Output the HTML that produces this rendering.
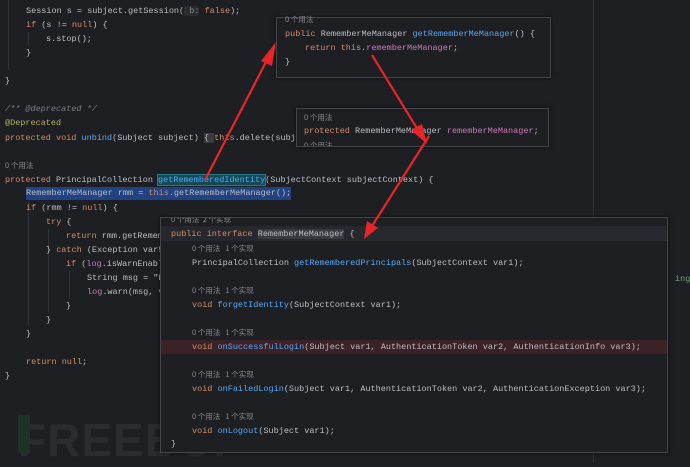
<!DOCTYPE html>
<html><head><meta charset="utf-8"><style>
body{margin:0;width:690px;height:463px;background:#1e1f22;overflow:hidden;position:relative;font-family:"Liberation Mono","Noto Sans CJK SC",monospace;font-size:8.5px;color:#bcbec4}
.l{position:absolute;height:14px;line-height:14px;white-space:pre}
.k{color:#cf8e6d}.m{color:#56a8f5}.f{color:#c77dbb}.c{color:#7a7e85;font-style:italic}.a{color:#b3ae60}.h{color:#868a91;font-family:"Noto Sans CJK SC","Liberation Sans",sans-serif;font-size:7.5px}
.s{color:#6aab73}
.pop{position:absolute;background:#1e1f22;border:1px solid #44464c;box-shadow:0 0 4px rgba(0,0,0,.6)}
.g{position:absolute;width:1px;background:#313338}
</style></head><body>
<div class="g" style="left:593px;top:0;height:463px"></div>
<div class="g" style="left:8px;top:0;height:70px"></div>
<div class="g" style="left:28px;top:32px;height:14px"></div>
<div class="g" style="left:28px;top:201px;height:125px"></div>
<div class="g" style="left:48px;top:229px;height:83px"></div>
<div class="g" style="left:69px;top:271px;height:28px"></div>

<div class="l" style="left:26px;top:4px">Session s = subject.getSession(<span style="background:#2b2d30;color:#868a91;border-radius:2px"> b:</span> <span class="k">false</span>);</div>
<div class="l" style="left:26px;top:18px"><span class="k">if</span> (s != <span class="k">null</span>) {</div>
<div class="l" style="left:46px;top:32px">s.stop();</div>
<div class="l" style="left:26px;top:46px">}</div>
<div class="l" style="left:5px;top:74px">}</div>
<div class="l c" style="left:5px;top:102px">/** @deprecated */</div>
<div class="l a" style="left:5px;top:116px">@Deprecated</div>
<div class="l" style="left:5px;top:131px"><span class="k">protected void </span><span class="m">unbind</span>(Subject subject) <span style="background:#393b40">{ </span><span class="k">this</span>.delete(subject);</div>
<div class="l h" style="left:5px;top:159px">0 个用法</div>
<div class="l" style="left:5px;top:173px"><span class="k">protected </span>PrincipalCollection <span style="background:#114957;outline:1px solid #2a7a8a;color:#56a8f5">getRememberedIdentity</span>(SubjectContext subjectContext) {</div>
<div class="l" style="left:26px;top:187px;background:#214283;height:13px;line-height:13px">RememberMeManager rmm = <span class="k">this</span>.getRememberMeManager();</div>
<div class="l" style="left:26px;top:201px"><span class="k">if</span> (rmm != <span class="k">null</span>) {</div>
<div class="l" style="left:46px;top:215px"><span class="k">try</span> {</div>
<div class="l" style="left:66px;top:229px"><span class="k">return</span> rmm.getRememberedPrincipals</div>
<div class="l" style="left:46px;top:243px">} <span class="k">catch</span> (Exception var5) {</div>
<div class="l" style="left:66px;top:257px"><span class="k">if</span> (<span class="f">log</span>.isWarnEnabled()) {</div>
<div class="l" style="left:87px;top:271px">String msg = "Del</div>
<div class="l" style="left:87px;top:285px"><span class="f">log</span>.warn(msg, var5);</div>
<div class="l" style="left:66px;top:299px">}</div>
<div class="l" style="left:46px;top:313px">}</div>
<div class="l" style="left:26px;top:327px">}</div>
<div class="l" style="left:26px;top:355px"><span class="k">return null</span>;</div>
<div class="l" style="left:5px;top:369px">}</div>
<div class="l s" style="left:675px;top:272px">ing</div>
<div style="position:absolute;left:18px;top:413px;font:bold 46px 'Liberation Sans',sans-serif;color:#2a2c2f;letter-spacing:1px">FREEBUF</div>
<div style="position:absolute;left:18px;top:415px;width:12px;height:38px;background:#1e3326"></div>

<div class="pop" style="left:276px;top:17px;width:273px;height:59px">
<div class="l h" style="left:8px;top:-5px">0 个用法</div>
<div class="l" style="left:8px;top:9px"><span class="k">public </span>RememberMeManager <span class="m">getRememberMeManager</span>() {</div>
<div class="l" style="left:28px;top:23px"><span class="k">return this</span>.<span class="f">rememberMeManager</span>;</div>
<div class="l" style="left:8px;top:37px">}</div>
</div>
<div class="pop" style="left:296px;top:108px;width:251px;height:37px;overflow:hidden">
<div class="l h" style="left:7px;top:2px">0 个用法</div>
<div class="l" style="left:7px;top:15px"><span class="k">protected </span>RememberMeManager <span class="f">rememberMeManager</span>;</div>
<div class="l h" style="left:7px;top:30px">0 个用法</div>
</div>
<div class="pop" style="left:160px;top:217px;width:506px;height:234px;overflow:hidden">
<div class="l h" style="left:10px;top:-5px">0 个用法  2 个实现</div>
<div style="position:absolute;left:0;top:8px;width:506px;height:15px;background:#26282d"></div>
<div class="l" style="left:10px;top:9px"><span class="k">public interface </span><span style="background:#393b40">RememberMeManager</span> {</div>
<div class="l h" style="left:31px;top:24px">0 个用法   1 个实现</div>
<div class="l" style="left:31px;top:38px">PrincipalCollection <span class="m">getRememberedPrincipals</span>(SubjectContext var1);</div>
<div class="l h" style="left:31px;top:66px">0 个用法   1 个实现</div>
<div class="l" style="left:31px;top:80px"><span class="k">void </span><span class="m">forgetIdentity</span>(SubjectContext var1);</div>
<div class="l h" style="left:31px;top:108px">0 个用法   1 个实现</div>
<div style="position:absolute;left:0;top:122px;width:506px;height:14px;background:#3b2227"></div>
<div class="l" style="left:31px;top:122px"><span class="k">void </span><span class="m">onSuccessfulLogin</span>(Subject var1, AuthenticationToken var2, AuthenticationInfo var3);</div>
<div class="l h" style="left:31px;top:150px">0 个用法   1 个实现</div>
<div class="l" style="left:31px;top:164px"><span class="k">void </span><span class="m">onFailedLogin</span>(Subject var1, AuthenticationToken var2, AuthenticationException var3);</div>
<div class="l h" style="left:31px;top:192px">0 个用法   1 个实现</div>
<div class="l" style="left:31px;top:206px"><span class="k">void </span><span class="m">onLogout</span>(Subject var1);</div>
<div class="l" style="left:10px;top:219px">}</div>
</div>

<svg style="position:absolute;left:0;top:0" width="690" height="463">
<g stroke="#e8262a" stroke-width="2.2" fill="#e8262a">
<line x1="205" y1="180" x2="268" y2="58"/>
<polygon points="276,42 261,61 272,66" stroke="none"/>
<line x1="372" y1="55" x2="418" y2="130"/>
<polygon points="427,144 411,130 422,124" stroke="none"/>
<line x1="429" y1="136" x2="372" y2="226"/>
<polygon points="364,239 367,221 378,228" stroke="none"/>
</g>
</svg>
</body></html>
